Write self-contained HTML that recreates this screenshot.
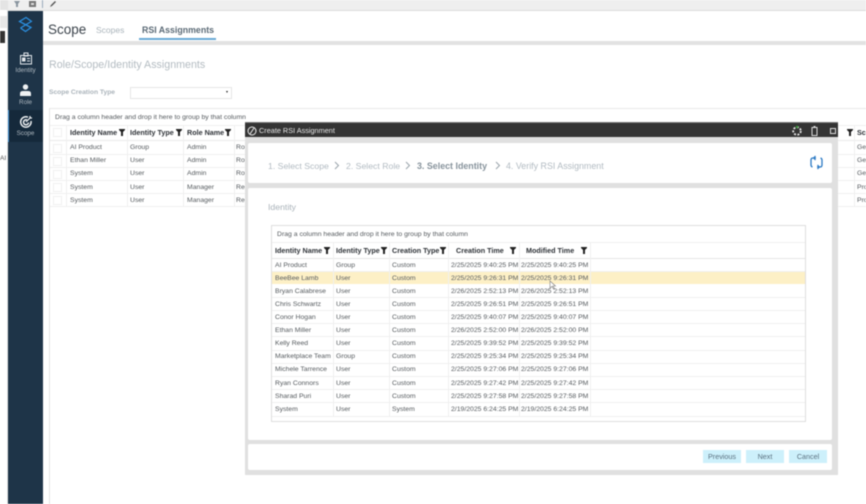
<!DOCTYPE html>
<html><head><meta charset="utf-8">
<style>
html,body{margin:0;padding:0;background:#fff}
#r{position:relative;width:866px;height:504px;overflow:hidden;background:#fff;font-family:"Liberation Sans",sans-serif;color:#555;filter:blur(.4px)}
#r div,#r span.a{position:absolute;white-space:nowrap}
.b{position:absolute;background:#f0f0f0}
.t{font-size:6.85px;line-height:13px;color:#555a5e}
.h{font-size:7.2px;line-height:15px;color:#2f3338;font-weight:bold}
svg{position:absolute}
</style></head><body><div id="r">
<!-- top strip -->
<div style="left:0;top:0;width:866px;height:10px;background:#efefef"></div>
<div style="left:0;top:10px;width:866px;height:1px;background:#dcdcdc"></div>
<div style="left:0;top:0;width:7px;height:504px;background:#fff;border-right:1px solid #e4e4e4"></div>
<div style="left:0;top:0;width:7px;height:10px;background:#e4e4e4"></div>
<div style="left:0;top:16px;width:7px;height:12px;background:#e8e8e8"></div>
<div style="left:0;top:31px;width:5px;height:12px;background:#333"></div>
<div style="left:0;top:153px;font-size:6.500px;color:#555;line-height:12px">AI</div>
<svg style="left:13px;top:0" width="50" height="9" viewBox="0 0 50 9"><path d="M1 1h6L5 4v3H3V4z" fill="#8a96a0"/><rect x="16" y="1" width="7" height="6" fill="#777"/><rect x="18" y="3" width="3" height="2" fill="#ddd"/><rect x="29" y="0" width="1" height="8" fill="#9ab"/><path d="M37 7l1-2 4-4 1 1-4 4z" fill="#555"/></svg>
<!-- sidebar -->
<div style="left:8px;top:11px;width:35px;height:493px;background:#1e3448"></div>
<div style="left:8px;top:110px;width:35px;height:32px;background:#15293b"></div>
<div style="left:8px;top:110px;width:1px;height:32px;background:#3b8ed0"></div>
<svg style="left:17px;top:16px" width="18" height="17" viewBox="0 0 18 17" fill="none" stroke="#2b8fe0" stroke-width="1.300"><path d="M14 5L9 1.500 2.500 5.500 14 11.500 8.500 15.500 3.500 12"/><path d="M3.500 12L15 5"/></svg>
<svg style="left:19px;top:52px" width="14" height="13" viewBox="0 0 14 13" fill="none" stroke="#e4e8ec" stroke-width="1"><rect x="1.500" y="3.500" width="11" height="8.500"/><rect x="5" y="1" width="4" height="3"/><rect x="3.500" y="6" width="2.500" height="3" fill="#e4e8ec"/><path d="M8 6.500h3M8 9h3"/></svg>
<div style="left:8px;top:66px;width:35px;text-align:center;font-size:6.300px;line-height:9px;color:#aeb8c0">Identity</div>
<svg style="left:19px;top:84px" width="13" height="13" viewBox="0 0 13 13"><circle cx="6.500" cy="3" r="2.700" fill="#eef1f3"/><path d="M1 12V9.500Q1 7 4 7h5q3 0 3 2.500V12z" fill="#eef1f3"/></svg>
<div style="left:8px;top:98px;width:35px;text-align:center;font-size:6.300px;line-height:9px;color:#aeb8c0">Role</div>
<svg style="left:19px;top:115px" width="14" height="14" viewBox="0 0 14 14" fill="none" stroke="#f0f2f4" stroke-width="1.500"><path d="M9 2.200A5.200 5.200 0 1 0 12 6"/><path d="M8 5A2.500 2.500 0 1 0 9.500 7.500"/><path d="M7 7l4-4M11 1v2h2" stroke-width="1.200"/></svg>
<div style="left:8px;top:129px;width:35px;text-align:center;font-size:6.300px;line-height:9px;color:#aeb8c0">Scope</div>
<!-- header -->
<div style="left:48px;top:20px;font-size:13.500px;line-height:20px;color:#3c444c">Scope</div>
<div style="left:96px;top:24px;font-size:8.500px;line-height:13px;color:#aab4bb">Scopes</div>
<div style="left:142px;top:24px;font-size:8.800px;line-height:13px;color:#5b6a76;font-weight:bold">RSI Assignments</div>
<div style="left:139px;top:38px;width:77px;height:1.500px;background:#68a9d6"></div>
<div style="left:43px;top:41px;width:823px;height:4px;background:#e2e2e2"></div>
<div style="left:49px;top:57px;font-size:10.700px;line-height:16px;color:#b4bcc2">Role/Scope/Identity Assignments</div>
<div style="left:49px;top:87px;font-size:6.700px;line-height:11px;color:#aab3ba;font-weight:bold">Scope Creation Type</div>
<div style="left:130px;top:87px;width:100px;height:10px;border:1px solid #e6e6e6;background:#fff"></div>
<div style="left:226px;top:91px;width:0;height:0;border:1.500px solid transparent;border-top:2px solid #222"></div>
<!-- main grid -->
<div style="left:49px;top:108px;width:817px;height:1px;background:#e8e8e8"></div>
<div style="left:49px;top:108px;width:1px;height:396px;background:#e4e4e4"></div>
<div class="t" style="left:55px;top:111px">Drag a column header and drop it here to group by that column</div>
<div style="left:50px;top:125px;width:816px;height:1px;background:#f0f0f0"></div>
<div style="left:50px;top:140px;width:816px;height:1px;background:#eaeaea"></div>
<div class="b" style="left:66px;top:125px;width:1px;height:81px"></div>
<div class="b" style="left:127px;top:125px;width:1px;height:81px"></div>
<div class="b" style="left:183px;top:125px;width:1px;height:81px"></div>
<div class="b" style="left:234px;top:125px;width:1px;height:81px"></div>
<div class="b" style="left:854px;top:125px;width:1px;height:81px"></div>
<div class="b" style="left:50px;top:154px;width:816px;height:1px"></div>
<div class="b" style="left:50px;top:167px;width:816px;height:1px"></div>
<div class="b" style="left:50px;top:180px;width:816px;height:1px"></div>
<div class="b" style="left:50px;top:193px;width:816px;height:1px"></div>
<div class="b" style="left:50px;top:206px;width:816px;height:1px"></div>
<div style="left:53px;top:128px;width:7px;height:7px;border:1px solid #f0f0f0"></div>
<div style="left:53px;top:144px;width:7px;height:7px;border:1px solid #f0f0f0"></div>
<div style="left:53px;top:157px;width:7px;height:7px;border:1px solid #f0f0f0"></div>
<div style="left:53px;top:170px;width:7px;height:7px;border:1px solid #f0f0f0"></div>
<div style="left:53px;top:183px;width:7px;height:7px;border:1px solid #f0f0f0"></div>
<div style="left:53px;top:196px;width:7px;height:7px;border:1px solid #f0f0f0"></div>
<div class="h" style="left:70px;top:125px">Identity Name</div>
<div class="h" style="left:130px;top:125px">Identity Type</div>
<div class="h" style="left:187px;top:125px">Role Name</div>
<svg style="left:119px;top:129px" width="7" height="7" viewBox="0 0 7 7"><path d="M0 0h6v1L4 3v4H2V3L0 1z" fill="#222"/></svg>
<svg style="left:176px;top:129px" width="7" height="7" viewBox="0 0 7 7"><path d="M0 0h6v1L4 3v4H2V3L0 1z" fill="#222"/></svg>
<svg style="left:225px;top:129px" width="7" height="7" viewBox="0 0 7 7"><path d="M0 0h6v1L4 3v4H2V3L0 1z" fill="#222"/></svg>
<svg style="left:847px;top:129px" width="7" height="7" viewBox="0 0 7 7"><path d="M0 0h6v1L4 3v4H2V3L0 1z" fill="#222"/></svg>
<div class="h" style="left:857px;top:125px">Sc</div>
<div class="t" style="left:70px;top:141px">AI Product</div><div class="t" style="left:130px;top:141px">Group</div><div class="t" style="left:187px;top:141px">Admin</div><div class="t" style="left:236px;top:141px">Ro</div><div class="t" style="left:857px;top:141px">Ge</div>
<div class="t" style="left:70px;top:154px">Ethan Miller</div><div class="t" style="left:130px;top:154px">User</div><div class="t" style="left:187px;top:154px">Admin</div><div class="t" style="left:236px;top:154px">Ro</div><div class="t" style="left:857px;top:154px">Ge</div>
<div class="t" style="left:70px;top:167px">System</div><div class="t" style="left:130px;top:167px">User</div><div class="t" style="left:187px;top:167px">Admin</div><div class="t" style="left:236px;top:167px">Ro</div><div class="t" style="left:857px;top:167px">Ge</div>
<div class="t" style="left:70px;top:181px">System</div><div class="t" style="left:130px;top:181px">User</div><div class="t" style="left:187px;top:181px">Manager</div><div class="t" style="left:236px;top:181px">Re</div><div class="t" style="left:857px;top:181px">Pro</div>
<div class="t" style="left:70px;top:194px">System</div><div class="t" style="left:130px;top:194px">User</div><div class="t" style="left:187px;top:194px">Manager</div><div class="t" style="left:236px;top:194px">Re</div><div class="t" style="left:857px;top:194px">Pro</div>
<!-- dialog -->
<div style="left:245px;top:123px;width:593px;height:352px;background:#e0e0e0"></div>
<div style="left:245px;top:122px;width:593px;height:15px;background:#343434;border-top:1px solid #777;box-sizing:border-box"></div>
<svg style="left:247px;top:126px" width="10" height="10" viewBox="0 0 10 10" fill="none" stroke="#eee" stroke-width="1"><circle cx="5" cy="5" r="4"/><path d="M3 8L7 2"/></svg>
<div style="left:259px;top:125px;font-size:7.300px;line-height:12px;color:#e6e6e6">Create RSI Assignment</div>
<svg style="left:791px;top:125px" width="12" height="12" viewBox="0 0 12 12"><circle cx="6" cy="6" r="3.800" fill="none" stroke="#e8e8e8" stroke-width="1.800" stroke-dasharray="2 1.500"/><circle cx="6" cy="2" r="1.200" fill="#3a9a3a"/></svg>
<svg style="left:811px;top:126px" width="7" height="10" viewBox="0 0 7 10"><rect x="1" y="1.500" width="5" height="8" fill="none" stroke="#ddd"/><rect x="2.500" y="0" width="2" height="1.500" fill="#ddd"/></svg>
<div style="left:830px;top:128px;width:4px;height:4px;border:1px solid #ddd"></div>
<div style="left:248px;top:143px;width:584px;height:40px;background:#fff;border-radius:2px"></div>
<div style="left:268px;top:160px;font-size:8.700px;line-height:12px;color:#b2bbc2">1. Select Scope</div>
<div style="left:346px;top:160px;font-size:8.700px;line-height:12px;color:#b2bbc2">2. Select Role</div>
<div style="left:417px;top:160px;font-size:8.900px;line-height:12px;color:#87939c;font-weight:bold">3. Select Identity</div>
<div style="left:506px;top:160px;font-size:8.900px;line-height:12px;color:#b2bbc2">4. Verify RSI Assignment</div>
<svg style="left:334px;top:161px" width="6" height="9" viewBox="0 0 6 9" fill="none" stroke="#9aa4ab"><path d="M1 1l3.500 3.500L1 8"/></svg>
<svg style="left:405px;top:161px" width="6" height="9" viewBox="0 0 6 9" fill="none" stroke="#9aa4ab"><path d="M1 1l3.500 3.500L1 8"/></svg>
<svg style="left:495px;top:161px" width="6" height="9" viewBox="0 0 6 9" fill="none" stroke="#9aa4ab"><path d="M1 1l3.500 3.500L1 8"/></svg>
<svg style="left:810px;top:155px" width="13" height="15" viewBox="0 0 13 15" fill="none" stroke="#2a79c4" stroke-width="1.300"><path d="M6 3H3Q1 3 1 5v5q0 1.500 1.500 2"/><path d="M7 12h3q2 0 2-2V5q0-1.500-1.500-2"/><path d="M5.500 1L3.800 3 5.500 5"/><path d="M7.500 10l1.700 2-1.700 2"/></svg>
<div style="left:248px;top:188px;width:584px;height:252px;background:#fff;border-radius:2px"></div>
<div style="left:268px;top:201px;font-size:8.700px;line-height:12px;color:#a9b2b9">Identity</div>
<!-- inner grid -->
<div style="left:271px;top:225px;width:535px;height:197px;border:1px solid #dedede;box-sizing:border-box;background:#fff"></div>
<div class="t" style="left:277px;top:228px">Drag a column header and drop it here to group by that column</div>
<div style="left:272px;top:242px;width:533px;height:1px;background:#f0f0f0"></div>
<div style="left:272px;top:258px;width:533px;height:1px;background:#e6e6e6"></div>
<div style="left:272px;top:271px;width:533px;height:13px;background:#fdf0c6"></div>
<div class="b" style="left:333px;top:242px;width:1px;height:175px"></div>
<div class="b" style="left:389px;top:242px;width:1px;height:175px"></div>
<div class="b" style="left:448px;top:242px;width:1px;height:175px"></div>
<div class="b" style="left:519px;top:242px;width:1px;height:175px"></div>
<div class="b" style="left:590px;top:242px;width:1px;height:175px"></div>
<div class="b" style="left:272px;top:271px;width:533px;height:1px"></div>
<div class="b" style="left:272px;top:297px;width:533px;height:1px"></div>
<div class="b" style="left:272px;top:310px;width:533px;height:1px"></div>
<div class="b" style="left:272px;top:323px;width:533px;height:1px"></div>
<div class="b" style="left:272px;top:336px;width:533px;height:1px"></div>
<div class="b" style="left:272px;top:350px;width:533px;height:1px"></div>
<div class="b" style="left:272px;top:363px;width:533px;height:1px"></div>
<div class="b" style="left:272px;top:376px;width:533px;height:1px"></div>
<div class="b" style="left:272px;top:389px;width:533px;height:1px"></div>
<div class="b" style="left:272px;top:402px;width:533px;height:1px"></div>
<div class="b" style="left:272px;top:416px;width:533px;height:1px"></div>
<div class="h" style="left:275px;top:243px">Identity Name</div>
<div class="h" style="left:336px;top:243px">Identity Type</div>
<div class="h" style="left:392px;top:243px">Creation Type</div>
<div class="h" style="left:456px;top:243px">Creation Time</div>
<div class="h" style="left:526px;top:243px">Modified Time</div>
<svg style="left:324px;top:247px" width="7" height="7" viewBox="0 0 7 7"><path d="M0 0h6v1L4 3v4H2V3L0 1z" fill="#222"/></svg>
<svg style="left:381px;top:247px" width="7" height="7" viewBox="0 0 7 7"><path d="M0 0h6v1L4 3v4H2V3L0 1z" fill="#222"/></svg>
<svg style="left:440px;top:247px" width="7" height="7" viewBox="0 0 7 7"><path d="M0 0h6v1L4 3v4H2V3L0 1z" fill="#222"/></svg>
<svg style="left:510px;top:247px" width="7" height="7" viewBox="0 0 7 7"><path d="M0 0h6v1L4 3v4H2V3L0 1z" fill="#222"/></svg>
<svg style="left:581px;top:247px" width="7" height="7" viewBox="0 0 7 7"><path d="M0 0h6v1L4 3v4H2V3L0 1z" fill="#222"/></svg>
<div class="t" style="left:275px;top:259px">AI Product</div><div class="t" style="left:336px;top:259px">Group</div><div class="t" style="left:392px;top:259px">Custom</div><div class="t" style="left:451px;top:259px">2/25/2025 9:40:25 PM</div><div class="t" style="left:521px;top:259px">2/25/2025 9:40:25 PM</div>
<div class="t" style="left:275px;top:272px">BeeBee Lamb</div><div class="t" style="left:336px;top:272px">User</div><div class="t" style="left:392px;top:272px">Custom</div><div class="t" style="left:451px;top:272px">2/25/2025 9:26:31 PM</div><div class="t" style="left:521px;top:272px">2/25/2025 9:26:31 PM</div>
<div class="t" style="left:275px;top:285px">Bryan Calabrese</div><div class="t" style="left:336px;top:285px">User</div><div class="t" style="left:392px;top:285px">Custom</div><div class="t" style="left:451px;top:285px">2/26/2025 2:52:13 PM</div><div class="t" style="left:521px;top:285px">2/26/2025 2:52:13 PM</div>
<div class="t" style="left:275px;top:298px">Chris Schwartz</div><div class="t" style="left:336px;top:298px">User</div><div class="t" style="left:392px;top:298px">Custom</div><div class="t" style="left:451px;top:298px">2/25/2025 9:26:51 PM</div><div class="t" style="left:521px;top:298px">2/25/2025 9:26:51 PM</div>
<div class="t" style="left:275px;top:311px">Conor Hogan</div><div class="t" style="left:336px;top:311px">User</div><div class="t" style="left:392px;top:311px">Custom</div><div class="t" style="left:451px;top:311px">2/25/2025 9:40:07 PM</div><div class="t" style="left:521px;top:311px">2/25/2025 9:40:07 PM</div>
<div class="t" style="left:275px;top:324px">Ethan Miller</div><div class="t" style="left:336px;top:324px">User</div><div class="t" style="left:392px;top:324px">Custom</div><div class="t" style="left:451px;top:324px">2/26/2025 2:52:00 PM</div><div class="t" style="left:521px;top:324px">2/26/2025 2:52:00 PM</div>
<div class="t" style="left:275px;top:337px">Kelly Reed</div><div class="t" style="left:336px;top:337px">User</div><div class="t" style="left:392px;top:337px">Custom</div><div class="t" style="left:451px;top:337px">2/25/2025 9:39:52 PM</div><div class="t" style="left:521px;top:337px">2/25/2025 9:39:52 PM</div>
<div class="t" style="left:275px;top:350px">Marketplace Team</div><div class="t" style="left:336px;top:350px">Group</div><div class="t" style="left:392px;top:350px">Custom</div><div class="t" style="left:451px;top:350px">2/25/2025 9:25:34 PM</div><div class="t" style="left:521px;top:350px">2/25/2025 9:25:34 PM</div>
<div class="t" style="left:275px;top:363px">Michele Tarrence</div><div class="t" style="left:336px;top:363px">User</div><div class="t" style="left:392px;top:363px">Custom</div><div class="t" style="left:451px;top:363px">2/25/2025 9:27:06 PM</div><div class="t" style="left:521px;top:363px">2/25/2025 9:27:06 PM</div>
<div class="t" style="left:275px;top:377px">Ryan Connors</div><div class="t" style="left:336px;top:377px">User</div><div class="t" style="left:392px;top:377px">Custom</div><div class="t" style="left:451px;top:377px">2/25/2025 9:27:42 PM</div><div class="t" style="left:521px;top:377px">2/25/2025 9:27:42 PM</div>
<div class="t" style="left:275px;top:390px">Sharad Puri</div><div class="t" style="left:336px;top:390px">User</div><div class="t" style="left:392px;top:390px">Custom</div><div class="t" style="left:451px;top:390px">2/25/2025 9:27:58 PM</div><div class="t" style="left:521px;top:390px">2/25/2025 9:27:58 PM</div>
<div class="t" style="left:275px;top:403px">System</div><div class="t" style="left:336px;top:403px">User</div><div class="t" style="left:392px;top:403px">System</div><div class="t" style="left:451px;top:403px">2/19/2025 6:24:25 PM</div><div class="t" style="left:521px;top:403px">2/19/2025 6:24:25 PM</div>
<svg style="left:549px;top:280px" width="8" height="10" viewBox="0 0 8 10"><path d="M1 1v7l2-1.500 1.500 2.500 1-.500L4 6h2.500z" fill="#fff" stroke="#777" stroke-width=".6"/></svg>
<!-- footer -->
<div style="left:248px;top:444px;width:584px;height:26px;background:#fff;border-radius:2px"></div>
<div style="left:703px;top:450px;width:38px;height:13px;background:#cdf0fb;text-align:center;font-size:7.200px;line-height:13px;color:#5b7180">Previous</div>
<div style="left:746px;top:450px;width:38px;height:13px;background:#cdf0fb;text-align:center;font-size:7.200px;line-height:13px;color:#5b7180">Next</div>
<div style="left:789px;top:450px;width:38px;height:13px;background:#cdf0fb;text-align:center;font-size:7.200px;line-height:13px;color:#5b7180">Cancel</div>
</div></body></html>
